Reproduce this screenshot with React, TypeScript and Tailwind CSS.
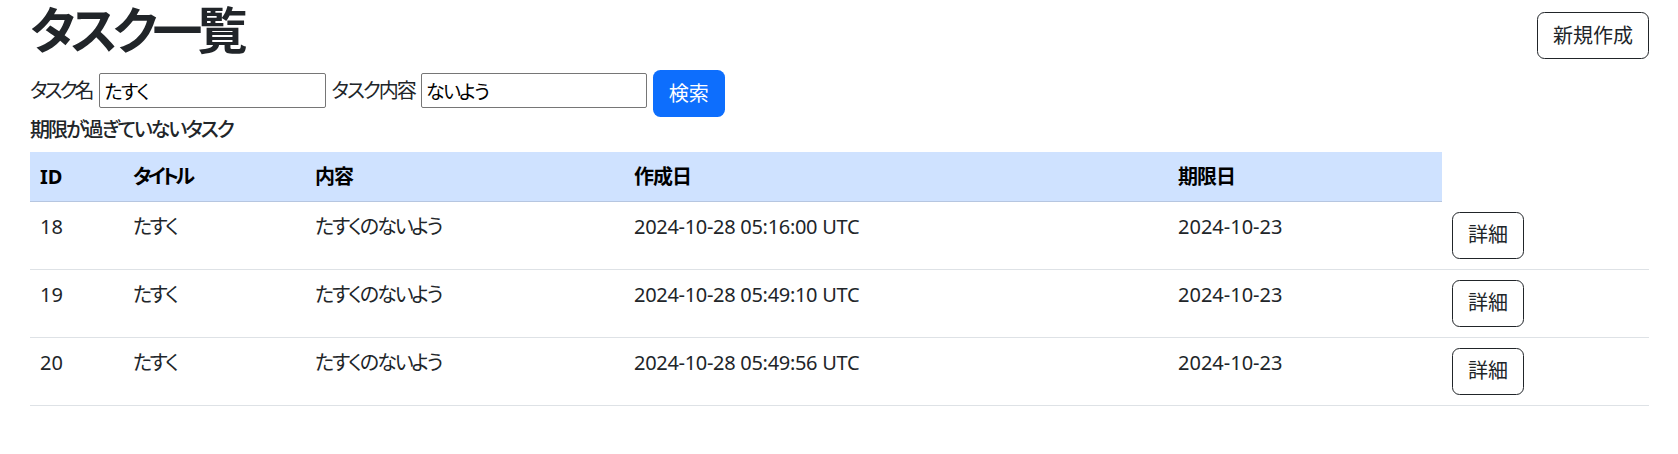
import React from 'react';

interface Task {
  id: number;
  title: string;
  content: string;
  createdAt: string;
  dueDate: string;
}

const TASKS: Task[] = [
  { id: 18, title: 'たすく', content: 'たすくのないよう', createdAt: '2024-10-28 05:16:00 UTC', dueDate: '2024-10-23' },
  { id: 19, title: 'たすく', content: 'たすくのないよう', createdAt: '2024-10-28 05:49:10 UTC', dueDate: '2024-10-23' },
  { id: 20, title: 'たすく', content: 'たすくのないよう', createdAt: '2024-10-28 05:49:56 UTC', dueDate: '2024-10-23' },
];

const HEADERS: { label: string; tracking: string }[] = [
  { label: 'ID', tracking: 'tracking-normal' },
  { label: 'タイトル', tracking: 'tracking-[-3.5px]' },
  { label: '内容', tracking: 'tracking-[-1px]' },
  { label: '作成日', tracking: 'tracking-[-1px]' },
  { label: '期限日', tracking: 'tracking-[-1px]' },
];

const td = 'border-b border-[#dee2e6] px-[10px] py-[10px] align-top';

export default function App() {
  return (
    <div className="min-h-[454px] bg-white pl-[30px] pr-[29px] text-[#212529] font-['Noto_Sans','Noto_Sans_CJK_JP',sans-serif] [font-feature-settings:'palt']">
      {/* Title row */}
      <div className="flex items-start justify-between">
        <h1 className="pr-[6px] text-[50px] leading-[60px] font-bold tracking-[-5px]">タスク一覧</h1>
        <button className="mt-[12px] h-[47px] w-[112px] rounded-[7.5px] border border-[#212529] text-[20px] leading-[30px]">
          新規作成
        </button>
      </div>

      {/* Search form */}
      <div className="mt-[10px] flex h-[47px] items-start">
        <label className="mt-[6px] text-[20px] leading-[30px] tracking-[-3px]">タスク名</label>
        <input
          defaultValue="たすく"
          className="ml-[8px] mt-[3px] h-[35px] w-[227px] rounded-[2px] border border-[#767676] px-[4px] text-[19px] tracking-[-1.5px] text-black outline-none"
        />
        <label className="ml-[5px] mt-[6px] text-[20px] leading-[30px] tracking-[-2px]">タスク内容</label>
        <input
          defaultValue="ないよう"
          className="ml-[6px] mt-[3px] h-[35px] w-[226px] rounded-[2px] border border-[#767676] px-[4px] text-[19px] tracking-[-1.5px] text-black outline-none"
        />
        <button className="ml-[6px] h-[47px] w-[72px] rounded-[7.5px] bg-[#0d6efd] text-[20px] leading-[30px] text-white">
          検索
        </button>
      </div>

      <h6 className="mt-[1px] mb-[10px] text-[20px] leading-[24px] font-medium tracking-[-2px]">期限が過ぎていないタスク</h6>

      <table className="w-full table-fixed border-collapse text-left text-[20px] leading-[30px]">
        <colgroup>
          <col className="w-[93px]" />
          <col className="w-[182px]" />
          <col className="w-[319px]" />
          <col className="w-[544px]" />
          <col className="w-[274px]" />
          <col />
        </colgroup>
        <thead>
          <tr>
            {HEADERS.map(h => (
              <th
                key={h.label}
                className={`border-b border-[#b6c6e0] bg-[#cfe2ff] px-[10px] py-[10px] leading-[29px] font-bold text-black ${h.tracking}`}
              >
                {h.label}
              </th>
            ))}
          </tr>
        </thead>
        <tbody>
          {TASKS.map(t => (
            <tr key={t.id}>
              <td className={td}>{t.id}</td>
              <td className={`${td} tracking-[-2.5px]`}>{t.title}</td>
              <td className={`${td} tracking-[-2px]`}>{t.content}</td>
              <td className={`${td} tracking-[-0.3px]`}>{t.createdAt}</td>
              <td className={td}>{t.dueDate}</td>
              <td className={td}>
                <button className="flex h-[47px] w-[72px] items-center justify-center rounded-[7.5px] border border-[#212529] text-[20px]">
                  詳細
                </button>
              </td>
            </tr>
          ))}
        </tbody>
      </table>
    </div>
  );
}
